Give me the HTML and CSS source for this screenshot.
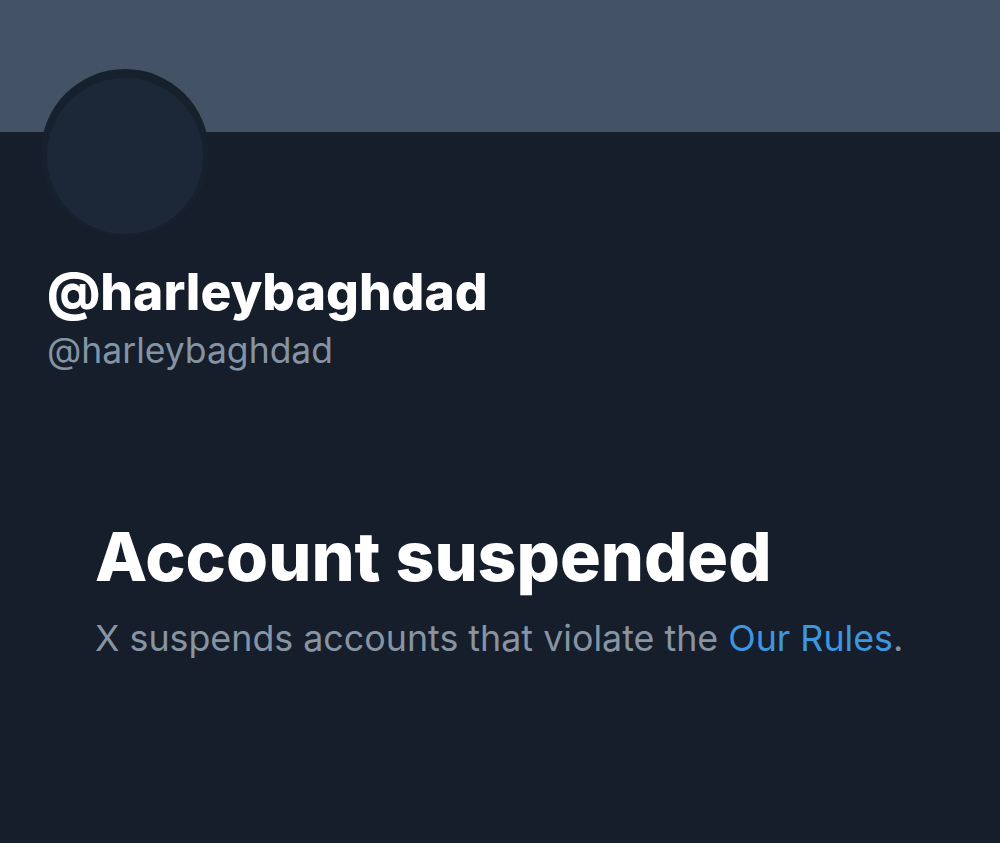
FILE: index.html
```html
<!DOCTYPE html>
<html lang="en">
<head>
<meta charset="utf-8">
<title>Account suspended</title>
<link rel="stylesheet" href="styles.css">
</head>
<body>
<div class="page">
  <div class="banner"></div>
  <div class="profile">
    <div class="avatar-row">
      <div class="avatar"><div class="avatar-inner"></div></div>
    </div>
    <div class="names">
      <div class="display-name">@harleybaghdad</div>
      <div class="handle">@harleybaghdad</div>
    </div>
  </div>
  <div class="notice">
    <h1 class="notice-title">Account suspended</h1>
    <p class="notice-text">X suspends accounts that violate the <a class="link" href="#">Our Rules</a>.</p>
  </div>
</div>
</body>
</html>
```
FILE: styles.css
```css
html, body {
  margin: 0;
  padding: 0;
  background: #151e2a;
}
body {
  font-family: Inter, "Noto Sans", "Liberation Sans", sans-serif;
  width: 1000px;
  height: 843px;
  overflow: hidden;
}
.page {
  display: flex;
  flex-direction: column;
}
.banner {
  height: 132px;
  background: #435264;
}
.profile {
  display: flex;
  flex-direction: column;
  padding-left: 41px;
}
.avatar-row {
  display: flex;
  height: 103px;
}
.avatar {
  box-sizing: border-box;
  width: 168px;
  height: 168px;
  margin-top: -63px;
  padding-top: 9px;
  border-radius: 50%;
  background: #17212e;
  display: flex;
  align-items: flex-start;
  justify-content: center;
  flex-shrink: 0;
}
.avatar-inner {
  width: 156px;
  height: 156px;
  border-radius: 50%;
  background: #1c2838;
}
.names {
  display: flex;
  flex-direction: column;
  padding-left: 6px;
  margin-top: 26px;
}
.display-name {
  color: #ffffff;
  font-weight: 800;
  font-size: 51.5px;
  line-height: 60px;
}
.handle {
  color: #8594a4;
  font-size: 35.5px;
  line-height: 44px;
  margin-top: 8px;
}
.notice {
  padding: 143px 0 0 95px;
}
.notice-title {
  margin: 0;
  color: #ffffff;
  font-weight: 800;
  font-size: 68px;
  line-height: 80px;
}
.notice-text {
  margin: 20px 0 0;
  color: #8794a3;
  font-size: 35.8px;
  line-height: 44px;
}
.link {
  color: #3d97e0;
  text-decoration: none;
}
```
